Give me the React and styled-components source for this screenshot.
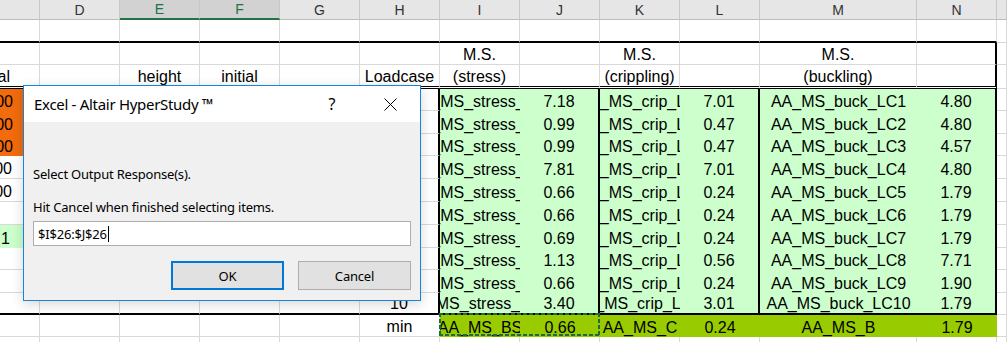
import React from 'react';
import styled, { createGlobalStyle } from 'styled-components';

const GlobalStyle = createGlobalStyle`
  html, body { margin: 0; padding: 0; background: #fff; overflow: hidden; }
  body { font-family: "Liberation Sans", Arial, sans-serif; }
  * { box-sizing: border-box; }
`;

const COLKEYS = ['C', 'D', 'E', 'F', 'G', 'H', 'I', 'J', 'K', 'L', 'M', 'N', 'O'];
const TABLE = 'CDEFGHIJKLMN'.split('');
const ORANGE = '#f26b0c';
const LIGHT_GREEN = '#ccffcc';
const LIME = '#99cc00';

const borderCss = (v) => {
  switch (v) {
    case 'thick': return '2px solid #000';
    case 'double': return '3px double #000';
    case 'none': return 'none';
    default: return '1px solid #d9d9d9';
  }
};

const Page = styled.div`
  position: relative;
  width: 1007px;
  height: 342px;
  overflow: hidden;
`;

const Sheet = styled.div`
  display: grid;
  grid-template-columns: 40px repeat(9, 80px) 157px 80px 1fr;
  grid-template-rows: 20px 23px 22px 24px 22px 23px 22px 23px 23px 23px 23px 22px 23px 22px 22px 20px;
  width: 1007px;
`;

const Head = styled.div`
  display: flex;
  align-items: center;
  justify-content: center;
  background: ${(p) => (p.$sel ? '#d2d2d2' : '#e6e6e6')};
  color: ${(p) => (p.$sel ? '#217346' : '#333')};
  border-right: 1px solid #c8c8c8;
  border-bottom: ${(p) => (p.$sel ? '2px solid #217346' : '1px solid #bdbdbd')};
  font-size: 14px;
  line-height: 18px;
`;

const Cell = styled.div`
  display: flex;
  align-items: flex-end;
  justify-content: ${(p) => (p.$align === 'end' ? 'flex-end' : 'center')};
  overflow: hidden;
  white-space: nowrap;
  min-width: 0;
  font-size: 16px;
  line-height: 18px;
  color: #000;
  background: ${(p) => p.$bg || '#fff'};
  border-right: ${(p) => borderCss(p.$r)};
  border-bottom: ${(p) => borderCss(p.$b)};
  padding-right: ${(p) => p.$pr || 0}px;
  padding-left: ${(p) => p.$pl || 0}px;
`;

const CellText = styled.span`
  flex-shrink: 0;
`;

const CopyRange = styled.div`
  grid-column: span 2;
  position: relative;
  display: grid;
  grid-template-columns: 80px 80px;
  &::after {
    content: '';
    position: absolute;
    top: -2px;
    left: -1px;
    right: 0;
    bottom: 1px;
    pointer-events: none;
    background:
      repeating-linear-gradient(90deg, #1d6b3f 0 4px, transparent 4px 6px) top / 100% 2px no-repeat,
      repeating-linear-gradient(90deg, #1d6b3f 0 4px, transparent 4px 6px) bottom / 100% 2px no-repeat,
      repeating-linear-gradient(180deg, #1d6b3f 0 4px, transparent 4px 6px) left / 2px 100% no-repeat,
      repeating-linear-gradient(180deg, #1d6b3f 0 4px, transparent 4px 6px) right / 2px 100% no-repeat;
  }
`;

/* ---------- Dialog ---------- */

const Dialog = styled.div`
  position: absolute;
  left: 23px;
  top: 85px;
  width: 398px;
  height: 216px;
  border: 1px solid #1883d7;
  background: #f0f0f0;
  display: flex;
  flex-direction: column;
  font-family: "Noto Sans", "Open Sans", sans-serif;
  box-shadow: 0 3px 12px rgba(0, 0, 0, 0.16);
`;

const TitleBar = styled.div`
  height: 36px;
  background: #fff;
  display: flex;
  align-items: center;
  padding-left: 10px;
  padding-right: 1px;
`;

const Title = styled.div`
  flex: 1;
  font-size: 15px;
  letter-spacing: -0.3px;
  line-height: 20px;
  color: #000;
`;

const TitleButton = styled.div`
  width: 58px;
  height: 36px;
  display: flex;
  align-items: center;
  justify-content: center;
  font-size: 16px;
  color: #000;
`;

const Body = styled.div`
  flex: 1;
  display: flex;
  flex-direction: column;
  padding: 43px 9px 10px;
  font-size: 13px;
  letter-spacing: -0.2px;
  line-height: 18px;
  color: #000;
`;

const Line = styled.div`
  margin-top: ${(p) => p.$mt || 0}px;
  white-space: nowrap;
`;

const Input = styled.div`
  margin-top: 5px;
  height: 25px;
  border: 1px solid #adadad;
  background: #fff;
  display: flex;
  align-items: center;
  padding-left: 4px;
  font-size: 13px;
`;

const Caret = styled.span`
  display: inline-block;
  width: 1px;
  height: 16px;
  background: #000;
  margin-left: 1px;
`;

const ButtonRow = styled.div`
  margin-top: 15px;
  display: flex;
  justify-content: flex-end;
  gap: 14px;
`;

const Button = styled.div`
  width: 113px;
  height: 29px;
  display: flex;
  align-items: center;
  justify-content: center;
  background: #e1e1e1;
  border: ${(p) => (p.$default ? '2px solid #0078d7' : '1px solid #adadad')};
  font-size: 13px;
`;

/* ---------- Data ---------- */

const J = ['7.18', '0.99', '0.99', '7.81', '0.66', '0.66', '0.69', '1.13', '0.66', '3.40'];
const L = ['7.01', '0.47', '0.47', '7.01', '0.24', '0.24', '0.24', '0.56', '0.24', '3.01'];
const N = ['4.80', '4.80', '4.57', '4.80', '1.79', '1.79', '1.79', '7.71', '1.90', '1.79'];

const base = () => Object.fromEntries(COLKEYS.map((k) => [k, { r: 'grid', b: 'grid' }]));

function buildRows() {
  const rows = [];
  const r1 = base();
  TABLE.forEach((k) => { r1[k].b = 'thick'; });
  rows.push(r1);

  const r2 = base();
  r2.N.r = 'thick';
  r2.I.text = 'M.S.';
  r2.K.text = 'M.S.';
  r2.M.text = 'M.S.';
  rows.push(r2);

  const r3 = base();
  r3.N.r = 'thick';
  TABLE.forEach((k) => { r3[k].b = 'double'; });
  Object.assign(r3.C, { text: 'Total', align: 'end', pr: 29 });
  r3.E.text = 'height';
  r3.F.text = 'initial';
  r3.H.text = 'Loadcase';
  r3.I.text = '(stress)';
  r3.K.text = '(crippling)';
  r3.M.text = '(buckling)';
  rows.push(r3);

  for (let i = 0; i < 10; i += 1) {
    const r = base();
    const n = i + 1;
    if (i < 3) Object.assign(r.C, { bg: ORANGE, r: 'none', b: 'none', text: `${n}.00`, align: 'end', pr: 27 });
    if (i === 3 || i === 4) Object.assign(r.C, { text: `${n}.00`, align: 'end', pr: 27 });
    if (i === 6) Object.assign(r.C, { bg: LIGHT_GREEN, r: 'none', b: 'none', text: '1', align: 'end', pr: 30 });
    Object.assign(r.H, { text: String(n), r: 'thick' });
    Object.assign(r.I, { bg: LIGHT_GREEN, r: 'none', b: 'none', pl: 4, text: `AA_MS_stress_LC${n}` });
    Object.assign(r.J, { bg: LIGHT_GREEN, r: 'thick', b: 'none', text: J[i] });
    Object.assign(r.K, { bg: LIGHT_GREEN, r: 'none', b: 'none', pl: 4, text: `AA_MS_crip_LC${n}` });
    Object.assign(r.L, { bg: LIGHT_GREEN, r: 'thick', b: 'none', text: L[i] });
    Object.assign(r.M, { bg: LIGHT_GREEN, r: 'none', b: 'none', text: `AA_MS_buck_LC${n}` });
    Object.assign(r.N, { bg: LIGHT_GREEN, r: 'thick', b: 'none', text: N[i] });
    if (i === 9) TABLE.forEach((k) => { r[k].b = 'thick'; });
    rows.push(r);
  }
  return rows;
}

const ROWS = buildRows();

const renderCell = (c, key) => (
  <Cell key={key} $bg={c.bg} $r={c.r} $b={c.b} $align={c.align} $pr={c.pr} $pl={c.pl}>
    {c.text ? <CellText>{c.text}</CellText> : null}
  </Cell>
);

const MIN = base();
MIN.H.text = 'min';
Object.assign(MIN.I, { bg: LIME, r: 'none', b: 'none', text: 'AA_MS_BS' });
Object.assign(MIN.J, { bg: LIME, r: 'none', b: 'none', text: '0.66' });
Object.assign(MIN.K, { bg: LIME, r: 'none', b: 'none', text: 'AA_MS_C' });
Object.assign(MIN.L, { bg: LIME, r: 'none', b: 'none', text: '0.24' });
Object.assign(MIN.M, { bg: LIME, r: 'none', b: 'none', text: 'AA_MS_B' });
Object.assign(MIN.N, { bg: LIME, r: 'none', b: 'none', text: '1.79' });

const LAST = base();
COLKEYS.forEach((k) => { LAST[k].b = 'none'; });

const HEAD = { C: '', D: 'D', E: 'E', F: 'F', G: 'G', H: 'H', I: 'I', J: 'J', K: 'K', L: 'L', M: 'M', N: 'N', O: '' };

const CloseIcon = () => (
  <svg width="13" height="13" viewBox="0 0 13 13">
    <path d="M0.5 0.5 L12.5 12.5 M12.5 0.5 L0.5 12.5" stroke="#000" strokeWidth="1" fill="none" />
  </svg>
);

export default function App() {
  return (
    <Page>
      <GlobalStyle />
      <Sheet>
        {COLKEYS.map((k) => (
          <Head key={`h-${k}`} $sel={k === 'E' || k === 'F'}>{HEAD[k]}</Head>
        ))}
        {ROWS.map((row, ri) => (
          <React.Fragment key={`r${ri}`}>
            {COLKEYS.map((k) => renderCell(row[k], `r${ri}-${k}`))}
          </React.Fragment>
        ))}
        {['C', 'D', 'E', 'F', 'G', 'H'].map((k) => renderCell(MIN[k], `m-${k}`))}
        <CopyRange>
          {renderCell(MIN.I, 'm-I')}
          {renderCell(MIN.J, 'm-J')}
        </CopyRange>
        {['K', 'L', 'M', 'N', 'O'].map((k) => renderCell(MIN[k], `m-${k}`))}
        {COLKEYS.map((k) => renderCell(LAST[k], `l-${k}`))}
      </Sheet>

      <Dialog>
        <TitleBar>
          <Title>Excel - Altair HyperStudy ™</Title>
          <TitleButton>?</TitleButton>
          <TitleButton><CloseIcon /></TitleButton>
        </TitleBar>
        <Body>
          <Line>Select Output Response(s).</Line>
          <Line $mt={15}>Hit Cancel when finished selecting items.</Line>
          <Input>
            $I$26:$J$26
            <Caret />
          </Input>
          <ButtonRow>
            <Button $default>OK</Button>
            <Button>Cancel</Button>
          </ButtonRow>
        </Body>
      </Dialog>
    </Page>
  );
}
